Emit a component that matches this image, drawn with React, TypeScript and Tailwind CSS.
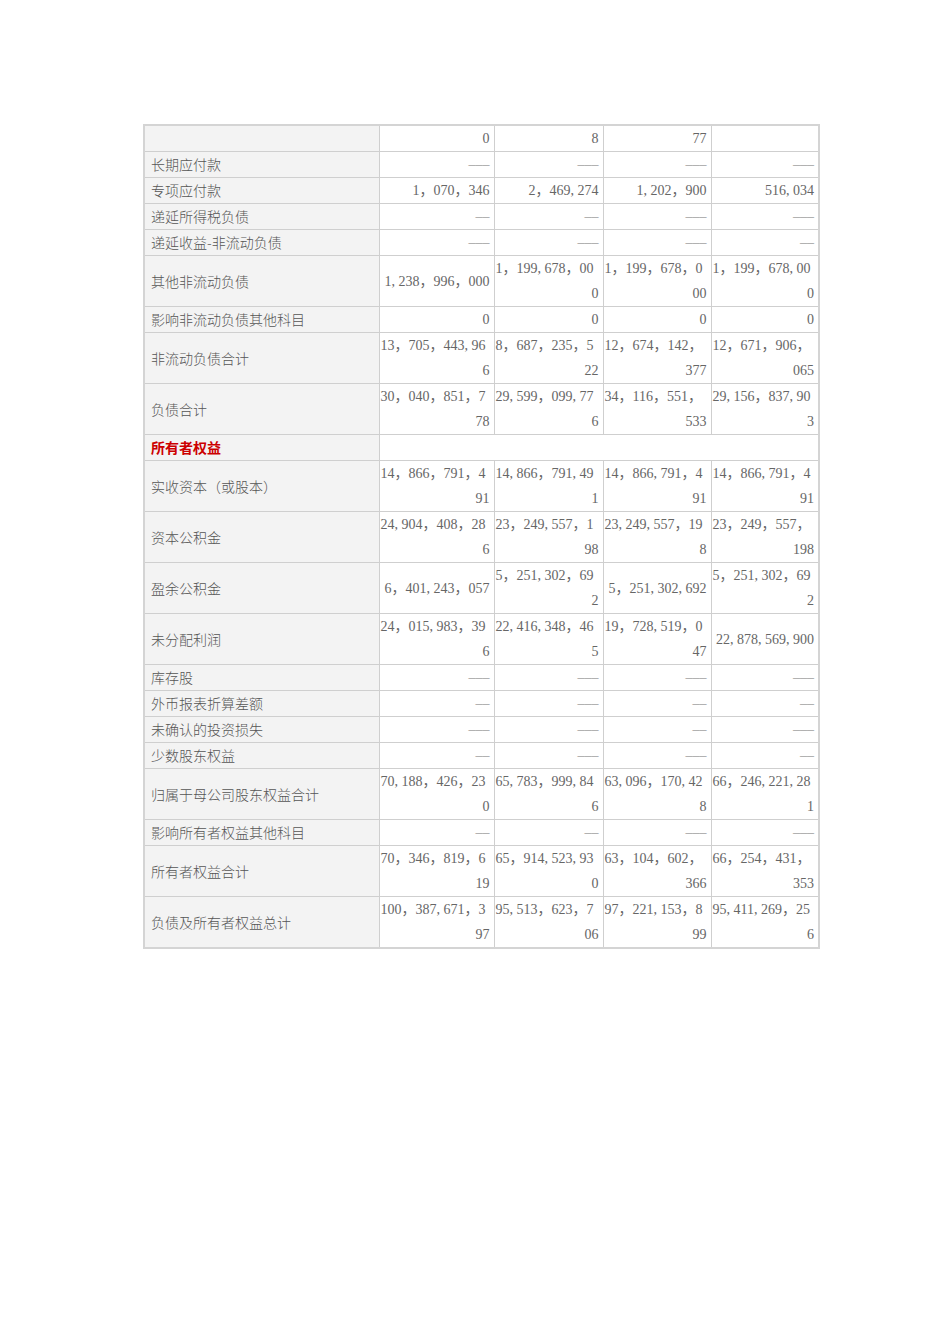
type Row = {
  label: string
  values?: string[][]
  head?: boolean
}

const L = '–––'
const S = '––'

const rows: Row[] = [
  { label: '', values: [['0'], ['8'], ['77'], ['']] },
  { label: '长期应付款', values: [[L], [L], [L], [L]] },
  { label: '专项应付款', values: [['1，070，346'], ['2，469,274'], ['1,202，900'], ['516,034']] },
  { label: '递延所得税负债', values: [[S], [S], [L], [L]] },
  { label: '递延收益-非流动负债', values: [[L], [L], [L], [S]] },
  {
    label: '其他非流动负债',
    values: [['1,238，996，000'], ['1，199,678，00', '0'], ['1，199，678，0', '00'], ['1，199，678,00', '0']],
  },
  { label: '影响非流动负债其他科目', values: [['0'], ['0'], ['0'], ['0']] },
  {
    label: '非流动负债合计',
    values: [['13，705，443,96', '6'], ['8，687，235，5', '22'], ['12，674，142，', '377'], ['12，671，906，', '065']],
  },
  {
    label: '负债合计',
    values: [['30，040，851，7', '78'], ['29,599，099,77', '6'], ['34，116，551，', '533'], ['29,156，837,90', '3']],
  },
  { label: '所有者权益', head: true },
  {
    label: '实收资本（或股本）',
    values: [['14，866，791，4', '91'], ['14,866，791,49', '1'], ['14，866,791，4', '91'], ['14，866,791，4', '91']],
  },
  {
    label: '资本公积金',
    values: [['24,904，408，28', '6'], ['23，249,557，1', '98'], ['23,249,557，19', '8'], ['23，249，557，', '198']],
  },
  {
    label: '盈余公积金',
    values: [['6，401,243，057'], ['5，251,302，69', '2'], ['5，251,302,692'], ['5，251,302，69', '2']],
  },
  {
    label: '未分配利润',
    values: [['24，015,983，39', '6'], ['22,416,348，46', '5'], ['19，728,519，0', '47'], ['22,878,569,900']],
  },
  { label: '库存股', values: [[L], [L], [L], [L]] },
  { label: '外币报表折算差额', values: [[S], [L], [S], [S]] },
  { label: '未确认的投资损失', values: [[L], [L], [S], [L]] },
  { label: '少数股东权益', values: [[S], [L], [L], [S]] },
  {
    label: '归属于母公司股东权益合计',
    values: [['70,188，426，23', '0'], ['65,783，999,84', '6'], ['63,096，170,42', '8'], ['66，246,221,28', '1']],
  },
  { label: '影响所有者权益其他科目', values: [[S], [S], [L], [L]] },
  {
    label: '所有者权益合计',
    values: [['70，346，819，6', '19'], ['65，914,523,93', '0'], ['63，104，602，', '366'], ['66，254，431，', '353']],
  },
  {
    label: '负债及所有者权益总计',
    values: [['100，387,671，3', '97'], ['95,513，623，7', '06'], ['97，221,153，8', '99'], ['95,411,269，25', '6']],
  },
]

// half-width commas take a full digit cell, as in the source font
const Num = ({ text }: { text: string }) => {
  if (text === L || text === S) return <span className="text-[#a0a0a0]">{text}</span>
  const parts = text.split(',')
  return (
    <>
      {parts.map((p, i) => (
        <span key={i}>
          {p}
          {i < parts.length - 1 && <span className="inline-block w-[7px] text-left">,</span>}
        </span>
      ))}
    </>
  )
}

export default function App() {
  return (
    <div className="min-h-[1344px] bg-white pl-[143px] pt-[124px]">
      <table className="w-[675px] table-fixed border-collapse border-2 border-[#d4d4d4] text-[14px] leading-[25px] text-[#666]">
        <colgroup>
          <col className="w-[235px]" />
          <col className="w-[115px]" />
          <col className="w-[109px]" />
          <col className="w-[108px]" />
          <col className="w-[108px]" />
        </colgroup>
        <tbody>
          {rows.map((r, i) => (
            <tr key={i}>
              <td
                className={
                  r.head
                    ? "h-[26px] border border-[#cfcfcf] bg-[#f3f3f3] pl-[6px] align-middle font-['Noto_Sans_CJK_SC',sans-serif] font-bold text-[#cc0000]"
                    : "h-[26px] border border-[#cfcfcf] bg-[#f3f3f3] pl-[6px] align-middle font-['Noto_Sans_CJK_SC',sans-serif] font-light text-[#555]"
                }
              >
                {r.label}
              </td>
              {r.head ? (
                <td colSpan={4} className="border border-[#cfcfcf]" />
              ) : (
                r.values!.map((v, j) => (
                  <td
                    key={j}
                    className="border border-[#cfcfcf] pl-[1px] pr-[4px] text-right align-middle font-['Liberation_Serif','Noto_Sans_CJK_SC',serif]"
                  >
                    {v.map((line, k) => (
                      <div key={k} className={k === 0 && v.length > 1 ? 'whitespace-nowrap text-left' : 'whitespace-nowrap'}>
                        <Num text={line} />
                      </div>
                    ))}
                  </td>
                ))
              )}
            </tr>
          ))}
        </tbody>
      </table>
    </div>
  )
}
